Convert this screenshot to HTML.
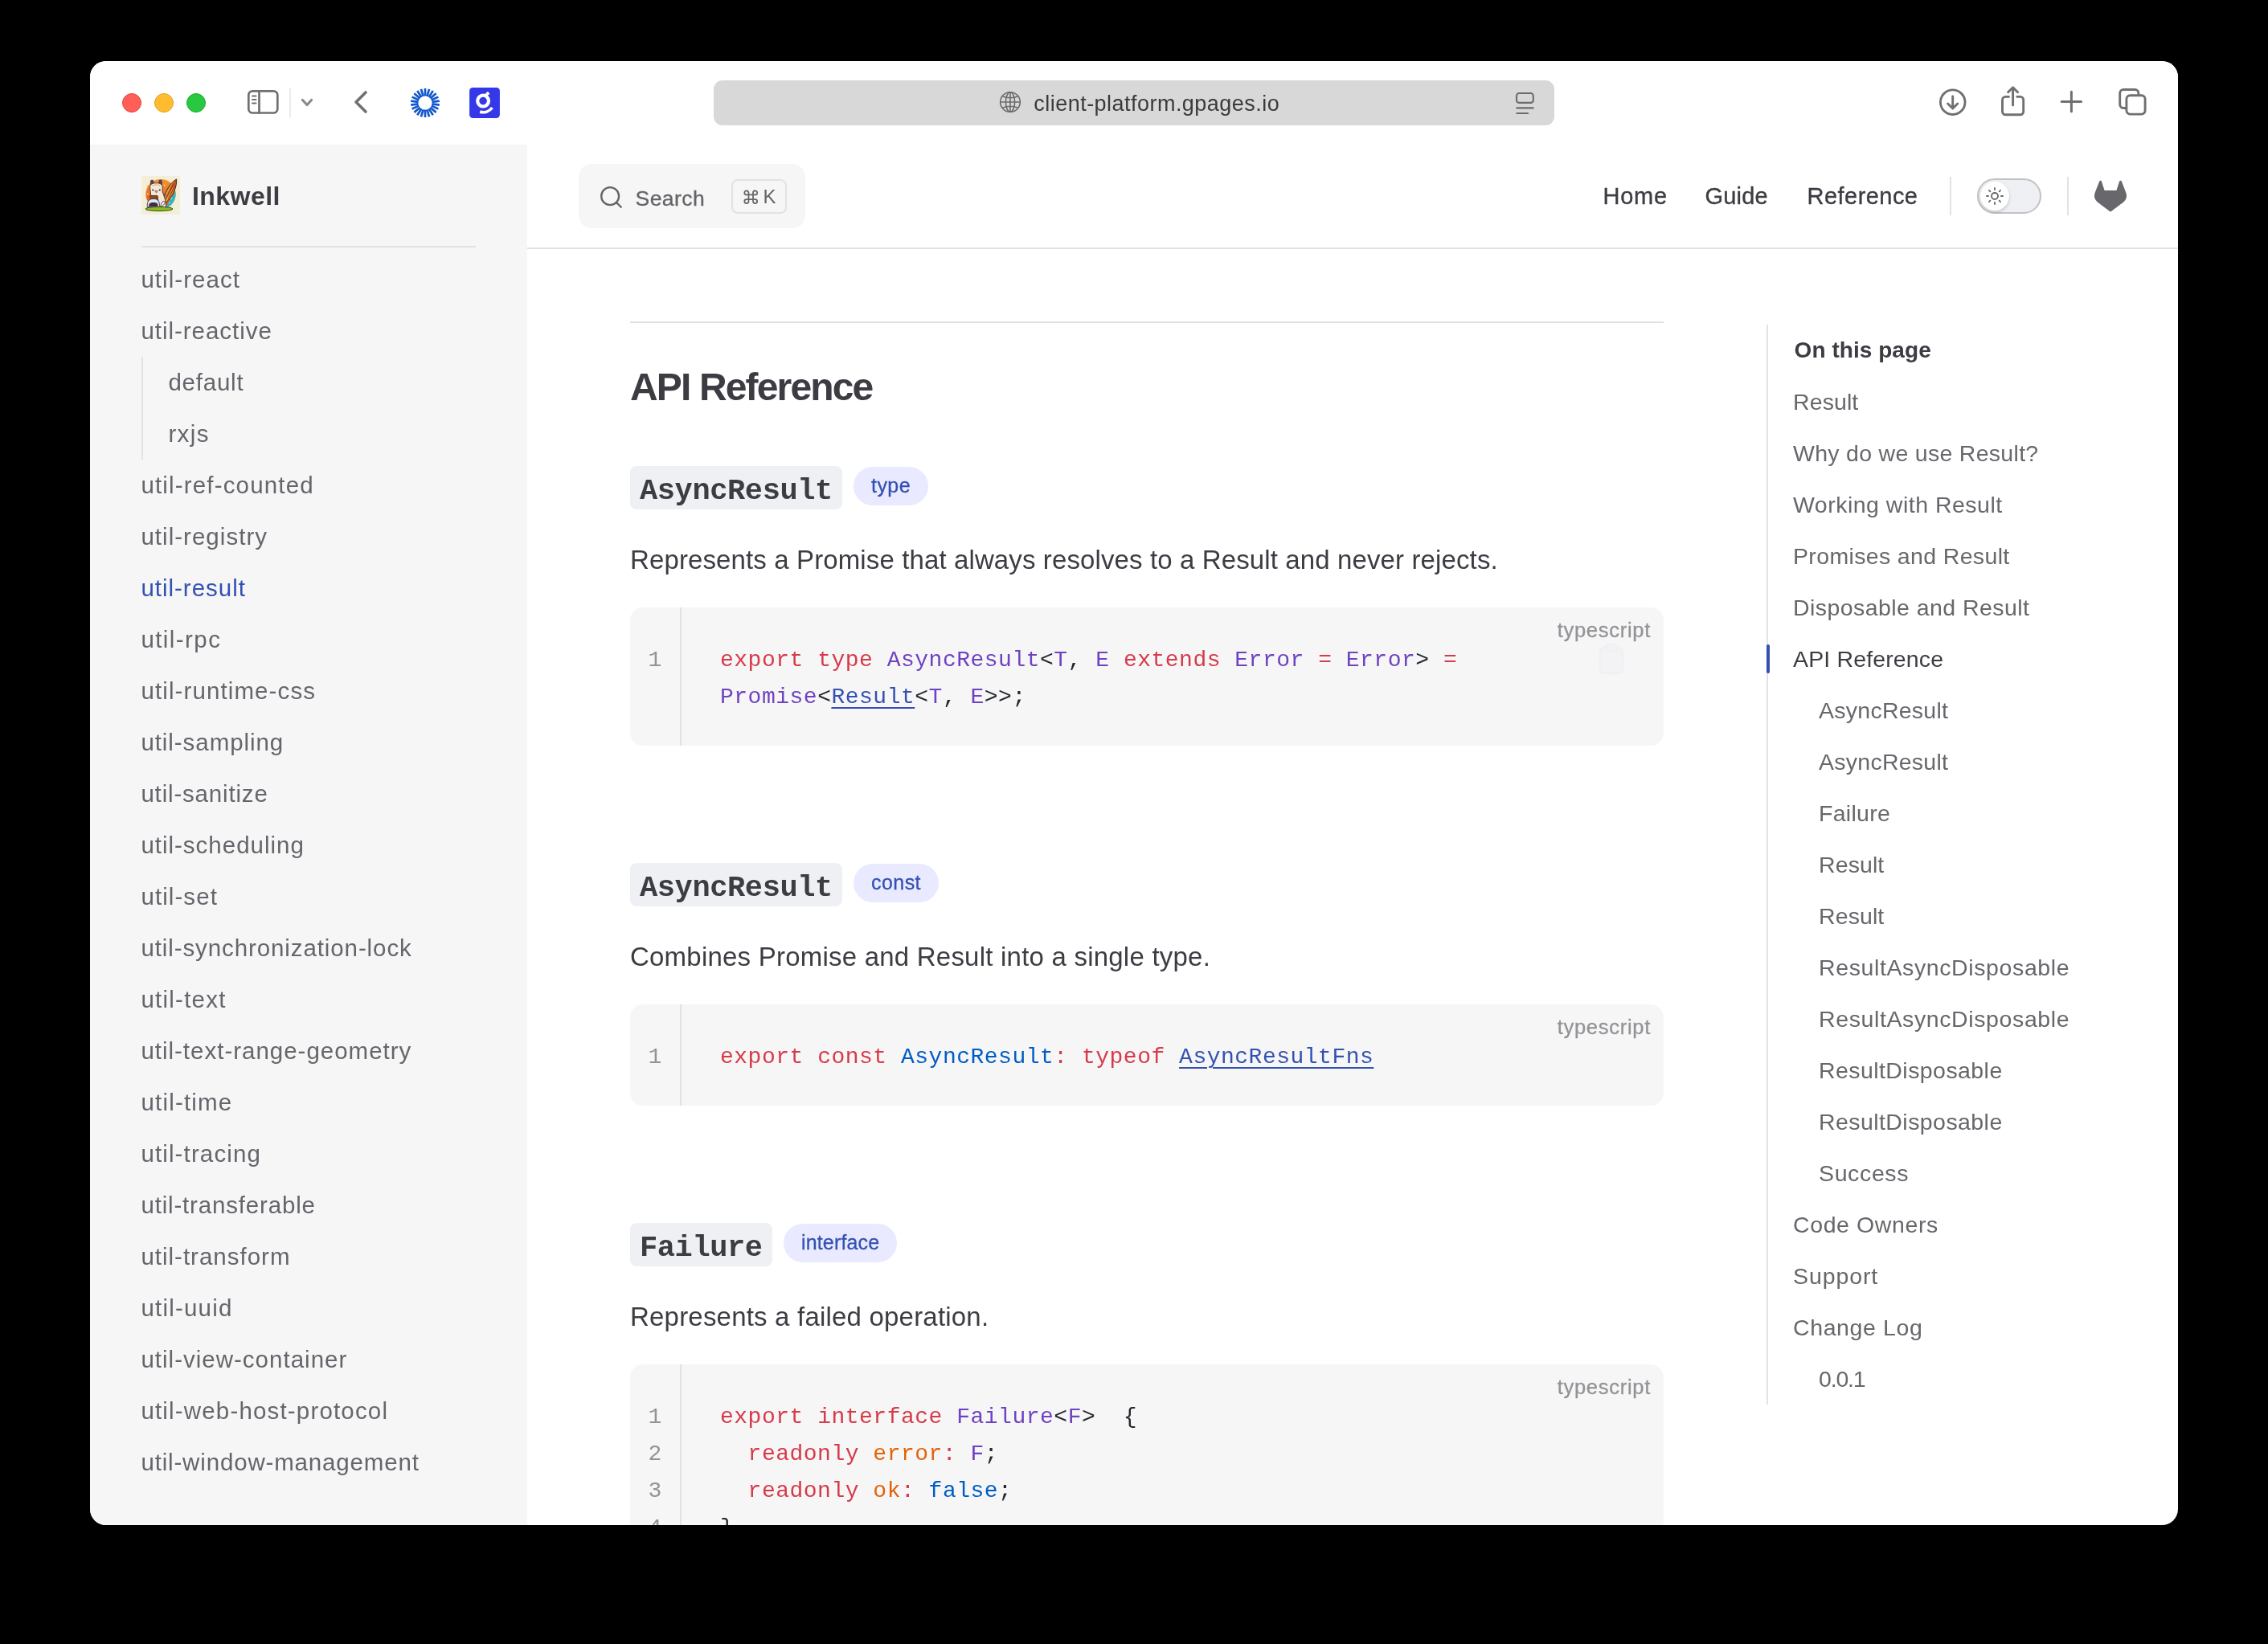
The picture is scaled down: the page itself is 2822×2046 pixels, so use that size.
<!DOCTYPE html>
<html lang="en">
<head>
<meta charset="utf-8">
<title>Inkwell - util-result</title>
<style>
*{box-sizing:border-box;margin:0;padding:0}
html,body{width:2822px;height:2046px;background:#000;overflow:hidden}
body{font-family:"Liberation Sans",sans-serif;color:#3c3c43;position:relative}
#win{position:absolute;left:0;top:0;width:2822px;height:2046px;clip-path:inset(76px 112px 148px 112px round 20px);background:#fff}
#fg{position:absolute;left:0;top:0;width:2822px;height:2046px;will-change:transform}
/* safari toolbar */
#tb{position:absolute;left:112px;top:76px;width:2598px;height:104px;background:#fff}
.tl{position:absolute;top:116px;width:24px;height:24px;border-radius:50%}
#url{position:absolute;left:888px;top:100px;width:1046px;height:56px;border-radius:11px;background:#d8d8d8}
#urltxt{position:absolute;left:1286.3px;top:101.3px;height:56px;line-height:56px;font-size:27px;color:#3b3b3b;white-space:nowrap;letter-spacing:0.47px}
svg{position:absolute;overflow:visible}
/* sidebar */
#sb{position:absolute;left:112px;top:180px;width:544px;height:1718px;background:#f6f6f7}
#title{position:absolute;left:239px;letter-spacing:0.45px;top:212px;height:64px;line-height:64px;font-size:32px;font-weight:700;color:#3c3c43;white-space:nowrap}
#sbline{position:absolute;left:176px;top:306px;width:416px;height:2px;background:#e2e2e3}
#sblist{position:absolute;left:175.4px;top:316px;width:440px}
#sblist div{height:64px;line-height:64px;font-size:29.5px;color:#65656b;white-space:nowrap}
#sblist div.n{padding-left:34px}
#sblist div.act{color:#3451b2}
#sbnest{position:absolute;left:176px;top:444px;width:2px;height:128px;background:#e2e2e3}
/* nav */
#navline{position:absolute;left:656px;top:308px;width:2054px;height:2px;background:#e2e2e3}
#search{position:absolute;left:720px;top:204px;width:282px;height:80px;border-radius:16px;background:#f6f6f7}
#searchtxt{position:absolute;left:790.5px;top:206px;height:80px;line-height:82px;font-size:26.5px;color:#656569;letter-spacing:0.45px;-webkit-text-stroke:0.3px #656569}
#kbd{position:absolute;left:910px;top:223px;width:69px;height:43px;border:2px solid #e2e2e3;border-radius:8px}
#kbdk{position:absolute;left:949.6px;top:223px;height:43px;line-height:44px;font-size:24px;color:#656569}
.nl{position:absolute;top:212px;height:64px;line-height:64px;font-size:29px;color:#3c3c43;white-space:nowrap;letter-spacing:0.15px;-webkit-text-stroke:0.35px #3c3c43}
.vdiv{position:absolute;top:220px;width:2px;height:48px;background:#e2e2e3}
#toggle{position:absolute;left:2460px;top:222px;width:80px;height:44px;border-radius:22px;border:2px solid #c2c2c4;background:#eff0f3}
#knob{position:absolute;left:2464px;top:226px;width:36px;height:36px;border-radius:50%;background:#fff;box-shadow:0 2px 4px rgba(0,0,0,.08),0 2px 4px rgba(0,0,0,.1)}
/* aside */
#asline{position:absolute;left:2198px;top:404px;width:2px;height:1344px;background:#e2e2e3}
#asmark{position:absolute;left:2198px;top:802px;width:4px;height:36px;border-radius:4px;background:#3451b2}
#aslist{position:absolute;left:2231px;top:404px;width:460px}
#aslist div{height:64px;line-height:64px;font-size:28.5px;color:#67676c;white-space:nowrap}
#aslist div.t{padding-left:1.6px;font-weight:700;font-size:28px;color:#3c3c43;letter-spacing:0.05px}
#aslist div.n{padding-left:32px}
#aslist div.act{color:#3c3c43}
/* main */
#h2line{position:absolute;left:784px;top:400px;width:1286px;height:2px;background:#e2e2e3}
#h2{position:absolute;left:784px;top:450px;height:64px;line-height:64px;font-size:48px;font-weight:700;color:#3c3c43;letter-spacing:-1.85px;white-space:nowrap}
.h3c{position:absolute;left:784px;height:54px;border-radius:8px;background:#eff0f3;font-family:"Liberation Mono",monospace;font-weight:700;font-size:37px;line-height:62px;padding:0 12px;color:#3c3c43;white-space:nowrap;letter-spacing:-0.4px;overflow:hidden}
.bdg{position:absolute;height:48px;border-radius:24px;background:#e9eaff;color:#3451b2;font-size:25px;line-height:46px;padding:0 22px;white-space:nowrap;letter-spacing:0.45px;-webkit-text-stroke:0.3px #3451b2}
.p{position:absolute;left:784px;height:56px;line-height:56px;font-size:33px;color:#3c3c43;white-space:nowrap;letter-spacing:0.12px}
.cb{position:absolute;left:784px;width:1286px;border-radius:16px;background:#f6f6f7;overflow:hidden}
.cb .ln{position:absolute;left:0;top:0;bottom:0;width:64px;border-right:2px solid #e2e2e3;padding-top:43px;text-align:center;font-family:"Liberation Mono",monospace;font-size:28px;line-height:46px;color:#939397}
.cb pre{position:absolute;left:112px;top:43px;font-family:"Liberation Mono",monospace;font-size:28px;line-height:46px;color:#24292e;letter-spacing:0.5px}
.cb .lang{position:absolute;right:16px;top:4px;font-size:25.5px;line-height:48px;color:#939397;letter-spacing:0.72px;-webkit-text-stroke:0.3px #939397}
.k{color:#d73a49}.t{color:#6f42c1}.c{color:#005cc5}.o{color:#e36209}.l{color:#3451b2;text-decoration:underline;text-decoration-thickness:2px;text-underline-offset:5px}
</style>
</head>
<body>
<div id="win">
<div id="tb"></div>
<div id="sb"></div>
<div id="fg">

<div class="tl" style="left:152px;background:#ff5f57;border:1px solid #e2463f"></div>
<div class="tl" style="left:192px;background:#febc2e;border:1px solid #dfa023"></div>
<div class="tl" style="left:232px;background:#28c840;border:1px solid #1dad2b"></div>
<svg width="2822" height="200" style="left:0;top:0" fill="none" stroke="#707070" stroke-width="3" stroke-linecap="round" stroke-linejoin="round">
<!-- sidebar icon -->
<rect x="309.3" y="113.3" width="36" height="27.2" rx="5" stroke-width="2.7"/>
<path d="M322.5 113.5V140.5" stroke-width="2.7"/>
<path d="M314 119.5H318.5M314 124H318.5M314 128.5H318.5" stroke-width="2"/>
<path d="M361 110V146" stroke="#ebebeb" stroke-width="2"/>
<path d="M376.5 124.5L382 130.5L387.5 124.5" stroke="#8a8a8a" stroke-width="3.2"/>
<path d="M455 115L443 127L455 139" stroke-width="3.6"/>
<path d="M529.00 119.60L529.00 110.10M531.39 119.94L534.07 110.83M533.60 120.95L538.73 112.96M535.42 122.53L542.60 116.31M536.73 124.57L545.37 120.62M537.41 126.89L546.82 125.54M537.41 129.31L546.82 130.66M536.73 131.63L545.37 135.58M535.42 133.67L542.60 139.89M533.60 135.25L538.73 143.24M531.39 136.26L534.07 145.37M529.00 136.60L529.00 146.10M526.61 136.26L523.93 145.37M524.40 135.25L519.27 143.24M522.58 133.67L515.40 139.89M521.27 131.63L512.63 135.58M520.59 129.31L511.18 130.66M520.59 126.89L511.18 125.54M521.27 124.57L512.63 120.62M522.58 122.53L515.40 116.31M524.40 120.95L519.27 112.96M526.61 119.94L523.93 110.83" stroke="#1257cc" stroke-width="2.7" stroke-linecap="butt"/>
<rect x="584.1" y="109" width="37.8" height="38" rx="4.2" fill="#3538e8" stroke="none"/>
<circle cx="601.1" cy="125.6" r="6.9" stroke="#fff" stroke-width="4.2"/>
<path d="M604.6 118.4L608.2 115.3" stroke="#fff" stroke-width="3.8" stroke-linecap="butt"/>
<path d="M597.21 139.15A14.1 14.1 0 0 0 612.42 134.01" stroke="#fff" stroke-width="3.7" stroke-linecap="butt"/>
<!-- download -->
<circle cx="2429.7" cy="127.2" r="15.3" stroke-width="2.9"/>
<path d="M2429.7 120V134.5M2423.6 129L2429.7 135L2435.8 129" stroke-width="2.9"/>
<!-- share -->
<path d="M2499.5 120.4H2495.5a4 4 0 0 0 -4 4V138.8a4 4 0 0 0 4 4H2513.7a4 4 0 0 0 4 -4V124.4a4 4 0 0 0 -4 -4H2509.8" stroke-width="2.9"/>
<path d="M2504.6 131V109.5M2498.6 114.8L2504.6 108.8L2510.6 114.8" stroke-width="2.9"/>
<!-- plus -->
<path d="M2565.2 126.5H2589.6M2577.4 114.3V138.7" stroke-width="3"/>
<!-- tabs -->
<rect x="2637.7" y="111.5" width="23.2" height="23" rx="4.5" stroke-width="2.9"/>
<rect x="2645.9" y="118.7" width="23.2" height="23.4" rx="4.5" stroke-width="2.9" fill="#fff"/>
</svg>
<div id="url"></div>
<svg width="30" height="30" style="left:1242px;top:111.9px" viewBox="-15 -15 30 30" fill="none" stroke="#6b6b6b" stroke-width="1.6">
<circle r="12.3"/><ellipse rx="5.6" ry="12.3"/><path d="M0 -12.3V12.3M-12.3 0H12.3M-10 -7.2Q0 -3.4 10 -7.2M-10 7.2Q0 3.4 10 7.2"/>
</svg>
<div id="urltxt">client-platform.gpages.io</div>
<svg width="30" height="32" style="left:1884px;top:112px" viewBox="0 0 30 32" fill="none" stroke="#6c6c6c" stroke-width="2.1" stroke-linecap="round">
<rect x="3" y="4" width="20.8" height="11.9" rx="3.2"/><path d="M3.3 22.4H23.7M3.3 29H17.2"/>
</svg>

<svg width="48" height="48" style="left:176px;top:219px" viewBox="0 0 48 48">
<defs><linearGradient id="lg1" x1="0" y1="0" x2="0" y2="1"><stop offset="0" stop-color="#f39a2e"/><stop offset="0.55" stop-color="#ee6a24"/><stop offset="1" stop-color="#e3301c"/></linearGradient>
<linearGradient id="lg2" x1="0" y1="0" x2="1" y2="0"><stop offset="0" stop-color="#f0b234"/><stop offset="0.55" stop-color="#ec8a2c"/><stop offset="1" stop-color="#d9541f"/></linearGradient>
<clipPath id="cc"><circle cx="24" cy="22.5" r="18.6"/></clipPath></defs>
<rect width="48" height="48" fill="#f3eed8"/>
<g clip-path="url(#cc)"><rect x="4" y="3" width="42" height="40" fill="url(#lg1)"/><path d="M48 10L27 44H48Z" fill="#27b9c6"/></g>
<path d="M7.6 11.2l.5 1 .9.3-.9.4-.5 1-.4-1-1-.4 1-.3z" fill="#f6b53c"/>
<circle cx="28.6" cy="11.6" r="0.9" fill="#fff3d8"/><circle cx="7.6" cy="22.4" r="0.8" fill="#ffe9c8"/><circle cx="37.4" cy="28" r="0.8" fill="#d8fbff"/><circle cx="34.6" cy="33.4" r="0.7" fill="#d8fbff"/>
<path d="M43.6 4C36.5 8 30 17 27.2 31.6L30.6 32.8C39 26 44.4 14 43.6 4Z" fill="url(#lg2)" stroke="#4a2626" stroke-width="1"/>
<path d="M42.6 6L28.6 32M39.6 9.5L30.4 27M42.4 11L33.4 28.5" stroke="#4a2626" stroke-width="0.7" fill="none"/>
<rect x="11.4" y="5" width="3.6" height="8.6" rx="1.7" fill="#5b3e50" stroke="#3a2733" stroke-width="0.6"/><rect x="21.8" y="5" width="3.6" height="8.6" rx="1.7" fill="#5b3e50" stroke="#3a2733" stroke-width="0.6"/>
<path d="M10.6 14C10.6 10.2 13.8 8.8 18.4 8.8S26.2 10.2 26.2 14V20C28.2 24 30 30 30.8 39H22L20 24.6H11.8Z" fill="#f6e8d2" stroke="#45303c" stroke-width="0.9"/>
<path d="M13.4 12.4C15.4 10.4 21.6 10.4 23.4 12.4" stroke="#d9b48a" stroke-width="1.2" fill="none"/>
<circle cx="14.2" cy="17.4" r="1" fill="#2a1a22"/><circle cx="22.8" cy="17.4" r="1" fill="#2a1a22"/>
<path d="M16.4 18.2L18.5 21.4L20.6 18.2Z" fill="#9d94ae" stroke="#5a5068" stroke-width="0.4"/>
<path d="M27 21L28.6 23 27.6 24.6 29.4 26.4" stroke="#45303c" stroke-width="0.6" fill="none"/>
<rect x="10.4" y="24.4" width="9.6" height="3.8" rx="1" fill="#8c4a22" stroke="#4a2a16" stroke-width="0.6"/>
<path d="M7.4 38.6C6.4 32 9.4 28.4 15 28.4S23.2 32 22.2 38.6Z" fill="#d9edf4" stroke="#4b4060" stroke-width="1"/>
<path d="M9.4 37.8C8.9 34.6 10 33 15 33S20.7 34.6 20.2 37.8Z" fill="#3a1740"/>
<path d="M10.4 35h9" stroke="#7a4a86" stroke-width="0.6"/>
<path d="M23.6 38.4C23.8 35.4 25.4 33.6 27.2 31.2L29.6 32.6C28.8 35.2 27 37.6 23.6 38.4Z" fill="#eee8f2" stroke="#4b4060" stroke-width="0.9"/>
<ellipse cx="22" cy="41" rx="17" ry="2.6" fill="#8cbb1f" stroke="#3d4a12" stroke-width="1"/>
</svg>
<div id="title">Inkwell</div>
<div id="sbline"></div>
<div id="sblist"><div style="letter-spacing:1.06px">util-react</div><div style="letter-spacing:0.97px">util-reactive</div><div class="n" style="letter-spacing:0.78px">default</div><div class="n" style="letter-spacing:1.37px">rxjs</div><div style="letter-spacing:1.17px">util-ref-counted</div><div style="letter-spacing:1.03px">util-registry</div><div class="act" style="letter-spacing:0.98px">util-result</div><div style="letter-spacing:1.43px">util-rpc</div><div style="letter-spacing:1.11px">util-runtime-css</div><div style="letter-spacing:0.94px">util-sampling</div><div style="letter-spacing:0.82px">util-sanitize</div><div style="letter-spacing:0.99px">util-scheduling</div><div style="letter-spacing:1.09px">util-set</div><div style="letter-spacing:0.9px">util-synchronization-lock</div><div style="letter-spacing:1.25px">util-text</div><div style="letter-spacing:0.99px">util-text-range-geometry</div><div style="letter-spacing:1.2px">util-time</div><div style="letter-spacing:1.13px">util-tracing</div><div style="letter-spacing:0.83px">util-transferable</div><div style="letter-spacing:1.0px">util-transform</div><div style="letter-spacing:1.2px">util-uuid</div><div style="letter-spacing:1.01px">util-view-container</div><div style="letter-spacing:1.17px">util-web-host-protocol</div><div style="letter-spacing:0.84px">util-window-management</div></div>
<div id="sbnest"></div>


<div id="navline"></div>
<div id="search"></div>
<svg width="29" height="29" style="left:746px;top:231.3px" viewBox="0 0 20 20" fill="none" stroke="#656569" stroke-width="1.6" stroke-linecap="round" stroke-linejoin="round"><path d="M14.386 14.386l4.0877 4.0877-4.0877-4.0877c-2.9418 2.9419-7.7115 2.9419-10.6533 0-2.9419-2.9418-2.9419-7.7115 0-10.6533 2.9418-2.9419 7.7115-2.9419 10.6533 0 2.9419 2.9418 2.9419 7.7115 0 10.6533z"/></svg>
<div id="searchtxt">Search</div>
<div id="kbd"></div>
<svg width="18.5" height="18.5" style="left:925px;top:236.3px" viewBox="0 0 20 20" fill="none" stroke="#656569" stroke-width="1.9"><path d="M7 7V4.2A2.8 2.8 0 1 0 4.2 7H15.8A2.8 2.8 0 1 0 13 4.2V15.8A2.8 2.8 0 1 0 15.8 13H4.2A2.8 2.8 0 1 0 7 15.8Z"/></svg>
<div id="kbdk">K</div>
<div class="nl" style="left:1994.6px;letter-spacing:0.7px">Home</div>
<div class="nl" style="left:2121.6px">Guide</div>
<div class="nl" style="left:2248.6px;letter-spacing:0.45px">Reference</div>
<div class="vdiv" style="left:2426px"></div>
<div id="toggle"></div><div id="knob"></div>
<svg width="24" height="24" style="left:2470px;top:232px" viewBox="0 0 24 24" fill="none" stroke="#67676c" stroke-width="1.8" stroke-linecap="round"><circle cx="12" cy="12" r="4"/><path d="M12 2v2M12 20v2M4.93 4.93l1.41 1.41M17.66 17.66l1.41 1.41M2 12h2M20 12h2M6.34 17.66l-1.41 1.41M19.07 4.93l-1.41 1.41"/></svg>
<div class="vdiv" style="left:2572px"></div>
<svg width="40" height="40" style="left:2606px;top:224px" viewBox="0 0 24 24" fill="#67676c"><path d="m23.6004 9.5927-.0337-.0862L20.3.9814a.851.851 0 0 0-.3362-.405.8748.8748 0 0 0-.9997.0539.8748.8748 0 0 0-.29.4399l-2.2055 6.748H7.5375l-2.2057-6.748a.8573.8573 0 0 0-.29-.4412.8748.8748 0 0 0-.9997-.0537.8585.8585 0 0 0-.3362.4049L.4332 9.5015l-.0325.0862a6.0657 6.0657 0 0 0 2.0119 7.0105l.0113.0087.03.0213 4.976 3.7264 2.462 1.8633 1.4995 1.1321a1.0085 1.0085 0 0 0 1.2197 0l1.4995-1.1321 2.4619-1.8633 5.006-3.7489.0125-.01a6.0682 6.0682 0 0 0 2.0094-7.003z"/></svg>

<div id="h2line"></div><div id="h2">API Reference</div><div class="h3c" style="top:580px">AsyncResult</div><div class="bdg" style="left:1062px;top:581px">type</div><div class="p" style="top:669px">Represents a Promise that always resolves to a Result and never rejects.</div><div class="cb" style="top:756px;height:172px"><div class="ln">1<br></div><pre><span class="k">export</span> <span class="k">type</span> <span class="t">AsyncResult</span>&lt;<span class="t">T</span>, <span class="t">E</span> <span class="k">extends</span> <span class="t">Error</span> <span class="k">=</span> <span class="t">Error</span>&gt; <span class="k">=</span>
<span class="t">Promise</span>&lt;<span class="l">Result</span>&lt;<span class="t">T</span>, <span class="t">E</span>&gt;&gt;;</pre><div class="lang">typescript</div></div><svg width="40" height="40" style="left:1985px;top:800px" viewBox="0 0 40 40" fill="none" stroke="#f0f0f2" stroke-width="2.5"><rect x="6" y="6" width="28" height="32" rx="5" fill="#f3f3f5"/><rect x="13" y="2" width="14" height="8" rx="3" fill="#f3f3f5"/></svg><div class="h3c" style="top:1074px">AsyncResult</div><div class="bdg" style="left:1062px;top:1075px">const</div><div class="p" style="top:1163px;letter-spacing:0.22px">Combines Promise and Result into a single type.</div><div class="cb" style="top:1250px;height:126px"><div class="ln">1</div><pre><span class="k">export</span> <span class="k">const</span> <span class="c">AsyncResult</span><span class="k">:</span> <span class="k">typeof</span> <span class="l">AsyncResultFns</span></pre><div class="lang">typescript</div></div><div class="h3c" style="top:1522px">Failure</div><div class="bdg" style="left:975px;top:1523px;letter-spacing:0.15px">interface</div><div class="p" style="top:1611px;letter-spacing:0.2px">Represents a failed operation.</div><div class="cb" style="top:1698px;height:260px"><div class="ln">1<br>2<br>3<br>4</div><pre><span class="k">export</span> <span class="k">interface</span> <span class="t">Failure</span>&lt;<span class="t">F</span>&gt;  {
  <span class="k">readonly</span> <span class="o">error</span><span class="k">:</span> <span class="t">F</span>;
  <span class="k">readonly</span> <span class="o">ok</span><span class="k">:</span> <span class="c">false</span>;
}</pre><div class="lang">typescript</div></div>
<div id="asline"></div><div id="asmark"></div><div id="aslist"><div class="t">On this page</div><div style="letter-spacing:0.1px">Result</div><div style="letter-spacing:0.29px">Why do we use Result?</div><div style="letter-spacing:0.49px">Working with Result</div><div style="letter-spacing:0.35px">Promises and Result</div><div style="letter-spacing:0.44px">Disposable and Result</div><div class="act" style="letter-spacing:0.14px">API Reference</div><div class="n" style="letter-spacing:0.26px">AsyncResult</div><div class="n" style="letter-spacing:0.26px">AsyncResult</div><div class="n" style="letter-spacing:0.28px">Failure</div><div class="n" style="letter-spacing:0.1px">Result</div><div class="n" style="letter-spacing:0.1px">Result</div><div class="n" style="letter-spacing:0.61px">ResultAsyncDisposable</div><div class="n" style="letter-spacing:0.61px">ResultAsyncDisposable</div><div class="n" style="letter-spacing:0.43px">ResultDisposable</div><div class="n" style="letter-spacing:0.43px">ResultDisposable</div><div class="n" style="letter-spacing:0.63px">Success</div><div style="letter-spacing:0.6px">Code Owners</div><div style="letter-spacing:0.9px">Support</div><div style="letter-spacing:0.61px">Change Log</div><div class="n" style="letter-spacing:-1.18px">0.0.1</div></div></div>
</div>
</div>
</body>
</html>
